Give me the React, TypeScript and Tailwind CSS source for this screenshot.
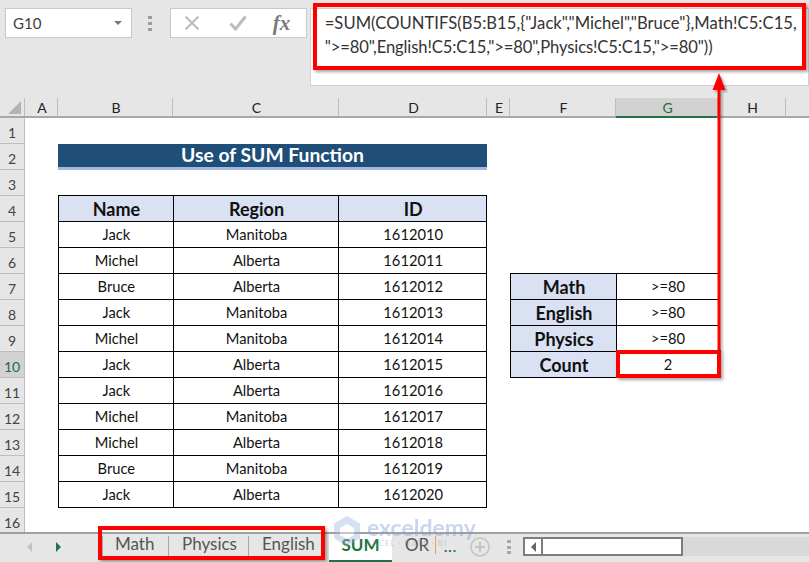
const rows = [
  ['Jack', 'Manitoba', '1612010'],
  ['Michel', 'Alberta', '1612011'],
  ['Bruce', 'Alberta', '1612012'],
  ['Jack', 'Manitoba', '1612013'],
  ['Michel', 'Manitoba', '1612014'],
  ['Jack', 'Alberta', '1612015'],
  ['Jack', 'Alberta', '1612016'],
  ['Michel', 'Manitoba', '1612017'],
  ['Michel', 'Alberta', '1612018'],
  ['Bruce', 'Manitoba', '1612019'],
  ['Jack', 'Alberta', '1612020'],
];

const side: Record<number, [string, string]> = {
  7: ['Math', '>=80'],
  8: ['English', '>=80'],
  9: ['Physics', '>=80'],
  10: ['Count', '2'],
};

const columns = [
  ['A', 'w-[33px]'],
  ['B', 'w-[115px]'],
  ['C', 'w-[166px]'],
  ['D', 'w-[148px]'],
  ['E', 'w-[23px]'],
  ['F', 'w-[106px]'],
  ['G', 'w-[102px]'],
  ['H', 'w-[68px]'],
];

function FormulaBar() {
  return (
    <div className="h-[98px] bg-[#e6e6e6] flex items-start pt-2 pl-[5px] shrink-0">
      <div className="w-[127px] h-[30px] bg-white border border-[#c8c8c8] flex items-center justify-between pl-[7px] pr-[9px] text-[15px] text-[#404040]">
        G10
        <span className="w-0 h-0 border-x-[4px] border-x-transparent border-t-[4px] border-t-[#777]" />
      </div>
      <div className="w-[5px] h-[15px] mt-[8px] ml-[16px] flex flex-col justify-between items-center">
        <span className="w-[4px] h-[3px] bg-[#9d9d9d]" />
        <span className="w-[4px] h-[3px] bg-[#9d9d9d]" />
        <span className="w-[4px] h-[3px] bg-[#9d9d9d]" />
      </div>
      <div className="w-[137px] h-[30px] ml-[17px] bg-white border border-[#c8c8c8] flex items-center">
        <svg width="16" height="16" viewBox="0 0 16 16" className="ml-[13px]">
          <path d="M1.5 1.5 14.5 14.5M14.5 1.5 1.5 14.5" stroke="#bcbcbc" strokeWidth="2" fill="none" />
        </svg>
        <svg width="18" height="16" viewBox="0 0 18 16" className="ml-[29px]">
          <path d="M1.5 8.5 6.5 14 16.5 1.5" stroke="#bcbcbc" strokeWidth="3" fill="none" />
        </svg>
        <span className="ml-[26px] font-['Liberation_Serif',serif] italic font-bold text-[21px] leading-none text-[#7a7a7a]">fx</span>
      </div>
      <div className="w-[500px] h-[78px] ml-[3px] bg-white border border-[#d0d0d0] pl-[14px] pt-[2px] text-[16.6px] leading-[24px] text-[#333] whitespace-nowrap">
        <div className="tracking-[0.05px]">=SUM(COUNTIFS(B5:B15,{'{'}"Jack","Michel","Bruce"{'}'},Math!C5:C15,</div>
        <div className="tracking-[-0.12px]">"&gt;=80",English!C5:C15,"&gt;=80",Physics!C5:C15,"&gt;=80"))</div>
      </div>
    </div>
  );
}

function ColumnHeaders() {
  return (
    <div className="h-[20px] bg-[#e6e6e6] flex border-b-2 border-[#a8a8a8] shrink-0 text-[14px] text-[#222]">
      <div className="w-[25px] h-full flex items-end justify-end pr-[3px] pb-[2px] border-r border-[#bdbdbd]">
        <span className="w-0 h-0 border-l-[13px] border-l-transparent border-b-[13px] border-b-[#b4b4b4]" />
      </div>
      {columns.map(([name, width]) => (
        <div
          key={name}
          className={`${width} flex items-center justify-center pl-[2px] border-r border-[#bdbdbd] ${name === 'G' ? 'bg-[#d2d2d2] text-[#1f6b45] h-[20px] border-b-2 border-b-[#217346]' : ''}`}
        >
          {name}
        </div>
      ))}
    </div>
  );
}

function Sheet() {
  const cell = 'flex items-center justify-center pl-px border-black border-b border-r text-[14.7px] text-[#111]';
  const head = 'flex items-center justify-center pl-px pt-px border-black border-b border-r bg-[#d9e1f2] font-bold text-[18px] text-[#111]';
  return (
    <div className="flex-1 overflow-hidden">
      {Array.from({ length: 16 }, (_, i) => i + 1).map((n) => {
        const row = n >= 5 && n <= 15 ? rows[n - 5] : null;
        const extra = side[n];
        return (
          <div key={n} className="h-[26px] flex">
            <div className={`w-[25px] shrink-0 flex items-center justify-center border-r border-b border-[#bdbdbd] text-[14px] pt-[3px] ${n === 10 ? 'bg-[#d2d2d2] text-[#1f6b45]' : 'bg-[#e6e6e6] text-[#444]'}`}>
              {n}
            </div>
            <div className="w-[33px] shrink-0" />
            {n === 2 && (
              <div className="w-[429px] shrink-0 bg-[#1f4e78] border-b-[3px] border-[#a4b8de] text-white font-bold text-[19.3px] flex items-center justify-center">
                Use of SUM Function
              </div>
            )}
            {n === 4 && (
              <div className="w-[429px] shrink-0 flex border-l border-t border-black h-[27px] -mt-px">
                <div className={`${head} w-[115px]`}>Name</div>
                <div className={`${head} w-[166px]`}>Region</div>
                <div className={`${head} w-[148px]`}>ID</div>
              </div>
            )}
            {row && (
              <div className="w-[429px] shrink-0 flex border-l border-black">
                <div className={`${cell} w-[115px]`}>{row[0]}</div>
                <div className={`${cell} w-[166px]`}>{row[1]}</div>
                <div className={`${cell} w-[148px]`}>{row[2]}</div>
              </div>
            )}
            {extra && (
              <div className={`ml-[23px] flex border-l border-black ${n === 7 ? 'border-t h-[27px] -mt-px' : ''}`}>
                <div className={`${head} w-[106px]`}>{extra[0]}</div>
                <div className={`${cell} w-[102px]`}>{extra[1]}</div>
              </div>
            )}
          </div>
        );
      })}
    </div>
  );
}

function Tabs() {
  return (
    <div className="h-[30px] shrink-0 bg-[#e6e6e6] border-t-2 border-[#a0a0a0] flex items-start text-[17px] text-[#555] relative">
      <span className="ml-[27px] mt-[8px] w-0 h-0 border-y-[5px] border-y-transparent border-r-[5px] border-r-[#c4c4c4]" />
      <span className="ml-[24px] mt-[8px] w-0 h-0 border-y-[5px] border-y-transparent border-l-[5px] border-l-[#217346]" />
      <div className="ml-[41px] mt-[2px] flex border-l border-[#a8a8a8] h-[20px] leading-[15px]">
        <div className="w-[66px] border-r border-[#a8a8a8] pl-[12px]">Math</div>
        <div className="w-[80px] border-r border-[#a8a8a8] pl-[13px]">Physics</div>
        <div className="w-[74px] pl-[13px]">English</div>
      </div>
      <div className="ml-[6px] w-[63px] h-[28px] bg-white border-b-2 border-[#217346] text-[#217346] font-bold flex items-center justify-center pb-[4px]">SUM</div>
      <div className="ml-[13px] mt-[-1px] flex items-center h-[24px] w-[52px] text-[#555]">
        OR<span className="ml-[6px] mr-[8px] w-px h-[18px] bg-[#e0a060]" /><span className="text-[#217346] font-bold text-[14px] tracking-[1px] pt-[3px]">...</span>
      </div>
      <svg width="20" height="20" viewBox="0 0 20 20" className="ml-[13px] mt-[3px]">
        <circle cx="10" cy="10" r="9" fill="none" stroke="#c4c4c4" strokeWidth="1.5" />
        <path d="M10 5v10M5 10h10" stroke="#c4c4c4" strokeWidth="2" />
      </svg>
      <div className="ml-[17px] mt-[6px] h-[14px] flex flex-col justify-between">
        <span className="w-[4px] h-[3px] bg-[#a8a8a8]" />
        <span className="w-[4px] h-[3px] bg-[#a8a8a8]" />
        <span className="w-[4px] h-[3px] bg-[#a8a8a8]" />
      </div>
      <div className="ml-[12px] mt-[3px] flex-1 h-[19px] bg-[#d9d9d9] flex">
        <div className="w-[160px] h-full bg-white border-2 border-[#7d7d7d] flex">
          <div className="w-[18px] border-r-2 border-[#7d7d7d] flex items-center justify-center">
            <span className="w-0 h-0 border-y-[5px] border-y-transparent border-r-[5px] border-r-[#666]" />
          </div>
        </div>
      </div>
    </div>
  );
}

export default function App() {
  return (
    <div className="w-[809px] h-[562px] relative overflow-hidden bg-white flex flex-col font-['Lato',sans-serif]">
      <FormulaBar />
      <ColumnHeaders />
      <Sheet />
      <Tabs />

      {/* red callouts */}
      <div className="absolute left-[313px] top-[3px] w-[493px] h-[67px] border-[4px] border-[#ff0000] shadow-[2px_2px_3px_rgba(0,0,0,0.35)]" />
      <div className="absolute left-[616px] top-[350px] w-[105px] h-[28px] border-[4px] border-[#ff0000] shadow-[2px_2px_3px_rgba(0,0,0,0.35)]" />
      <div className="absolute left-[98px] top-[526px] w-[227px] h-[34px] border-[4px] border-[#ff0000] shadow-[2px_2px_3px_rgba(0,0,0,0.35)]" />
      <svg width="24" height="290" viewBox="0 0 24 290" className="absolute left-[707px] top-[70px] drop-shadow-[2px_2px_1px_rgba(0,0,0,0.3)]">
        <path d="M12 280V18" stroke="#ff0000" strokeWidth="3" fill="none" />
        <path d="M12 3 18.5 20H5.5Z" fill="#ff0000" />
      </svg>

      {/* watermark */}
      <div className="absolute left-[333px] top-[515px] flex items-center gap-[6px] opacity-40 pointer-events-none">
        <svg width="28" height="32" viewBox="0 0 28 32">
          <path d="M14 1 27 8.5V23.5L14 31 1 23.5V8.5Z" fill="#9db2dc" />
          <path d="M14 9 21 13V20L14 24 7 20V13Z" fill="#fff" />
        </svg>
        <div className="leading-none">
          <div className="text-[23px] font-bold text-[#7f9bd6]">exceldemy</div>
          <div className="text-[8px] tracking-[1px] text-[#999]">EXCEL · DATA · BI</div>
        </div>
      </div>
    </div>
  );
}
